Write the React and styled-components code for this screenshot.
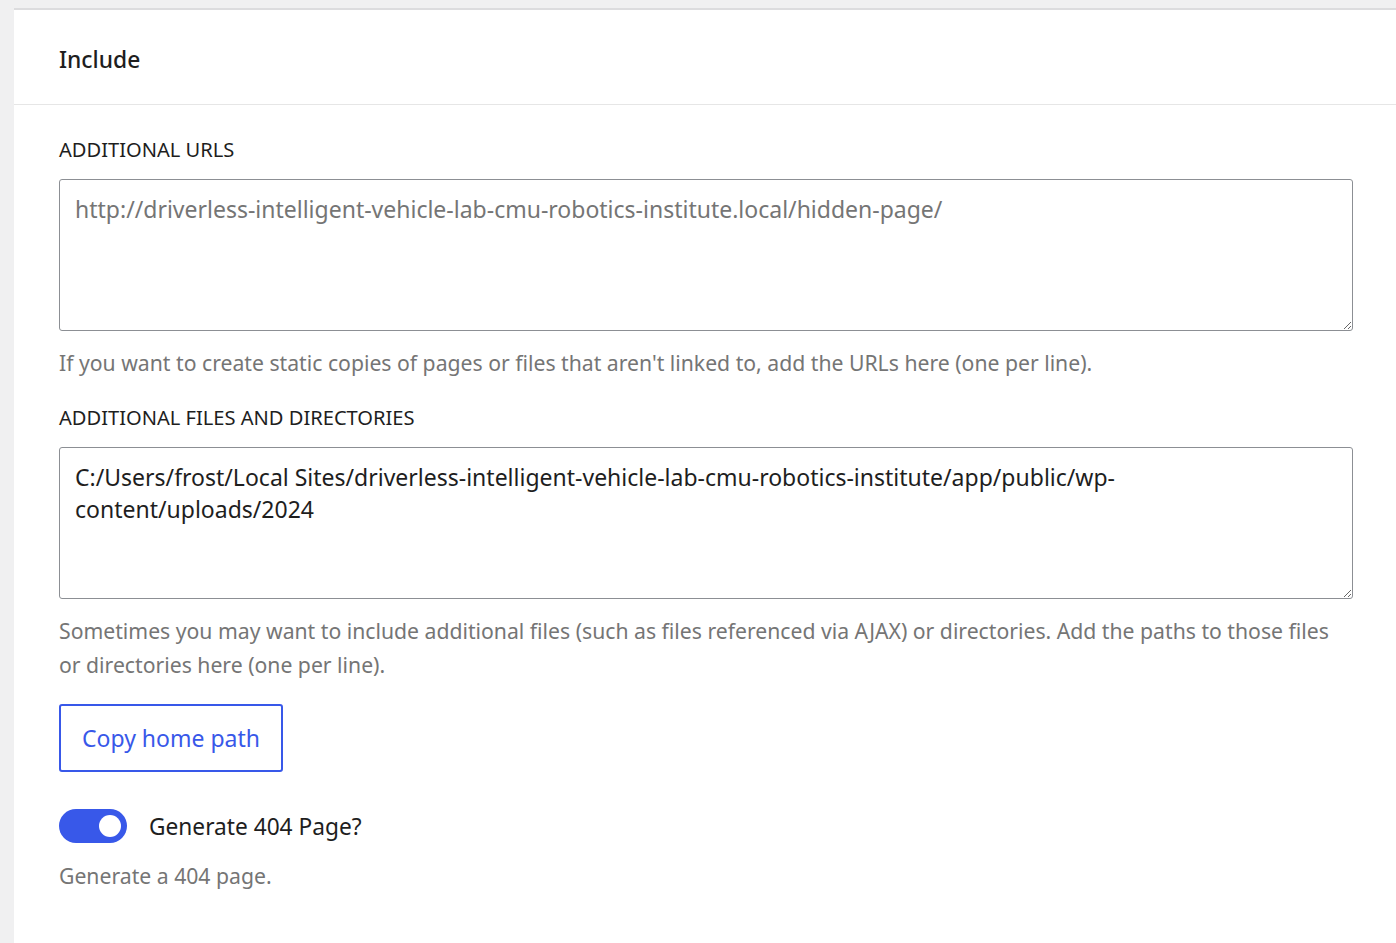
import React from 'react';
import styled, { createGlobalStyle } from 'styled-components';

const Global = createGlobalStyle`
  html, body {
    margin: 0;
    padding: 0;
    background: #f0f0f1;
  }
  body {
    font-family: "Noto Sans", "Open Sans", sans-serif;
    color: #1e1e1e;
  }
`

const Page = styled.div`
  padding: 8px 0 0 14px;
  min-height: 935px;
`

const Card = styled.section`
  background: #fff;
  border-top: 2px solid #dcdcde;
  min-height: 933px;
`

const CardHeader = styled.header`
  height: 95px;
  display: flex;
  align-items: center;
  padding: 4px 45px 0;
  box-sizing: border-box;
  border-bottom: 1px solid #e6e6e6;
`

const Title = styled.h2`
  margin: 0;
  font-size: 22.8px;
  font-weight: 500;
  color: #1e1e1e;
`

const CardBody = styled.div`
  padding: 30px 43px 40px 45px;
  display: flex;
  flex-direction: column;
`

const Label = styled.label`
  font-size: 20.1px;
  text-transform: uppercase;
  color: #1e1e1e;
  line-height: 30px;
  margin-bottom: 14px;
`

const TextArea = styled.textarea`
  box-sizing: border-box;
  width: 100%;
  height: 152px;
  border: 1px solid #8c8f94;
  border-radius: 3px;
  padding: 13px 15px;
  font-family: inherit;
  font-size: 23px;
  line-height: 32px;
  color: #1e1e1e;
  resize: vertical;
  &::placeholder {
    color: #757575;
  }
`

const Help = styled.p`
  margin: ${p => p.$top || 15}px 0 ${p => p.$gap || 23}px;
  font-size: 21.2px;
  line-height: 34px;
  color: #757575;
`

const OutlineButton = styled.button`
  align-self: flex-start;
  height: 68px;
  padding: 0 21px;
  background: #fff;
  border: 2px solid #3858e9;
  border-radius: 3px;
  color: #3858e9;
  font-family: inherit;
  font-size: 23px;
  cursor: pointer;
`

const ToggleRow = styled.div`
  display: flex;
  align-items: center;
  gap: 22px;
  margin-top: 37px;
`

const Track = styled.span`
  position: relative;
  width: 68px;
  height: 34px;
  border-radius: 17px;
  background: ${p => (p.$on ? '#3858e9' : '#949494')};
  flex-shrink: 0;
`

const Knob = styled.span`
  position: absolute;
  top: 6px;
  left: ${p => (p.$on ? '40px' : '6px')};
  width: 22px;
  height: 22px;
  border-radius: 50%;
  background: #fff;
`

const ToggleLabel = styled.span`
  font-size: 22.7px;
  color: #1e1e1e;
`

export default function App() {
  return (
    <>
      <Global />
      <Page>
        <Card>
          <CardHeader>
            <Title>Include</Title>
          </CardHeader>
          <CardBody>
            <Label>Additional URLs</Label>
            <TextArea placeholder="http://driverless-intelligent-vehicle-lab-cmu-robotics-institute.local/hidden-page/" />
            <Help>If you want to create static copies of pages or files that aren't linked to, add the URLs here (one per line).</Help>

            <Label>Additional Files and Directories</Label>
            <TextArea defaultValue="C:/Users/frost/Local Sites/driverless-intelligent-vehicle-lab-cmu-robotics-institute/app/public/wp-content/uploads/2024" />
            <Help $gap={22}>Sometimes you may want to include additional files (such as files referenced via AJAX) or directories. Add the paths to those files or directories here (one per line).</Help>

            <OutlineButton>Copy home path</OutlineButton>

            <ToggleRow>
              <Track $on>
                <Knob $on />
              </Track>
              <ToggleLabel>Generate 404 Page?</ToggleLabel>
            </ToggleRow>
            <Help $top={16}>Generate a 404 page.</Help>
          </CardBody>
        </Card>
      </Page>
    </>
  );
}
